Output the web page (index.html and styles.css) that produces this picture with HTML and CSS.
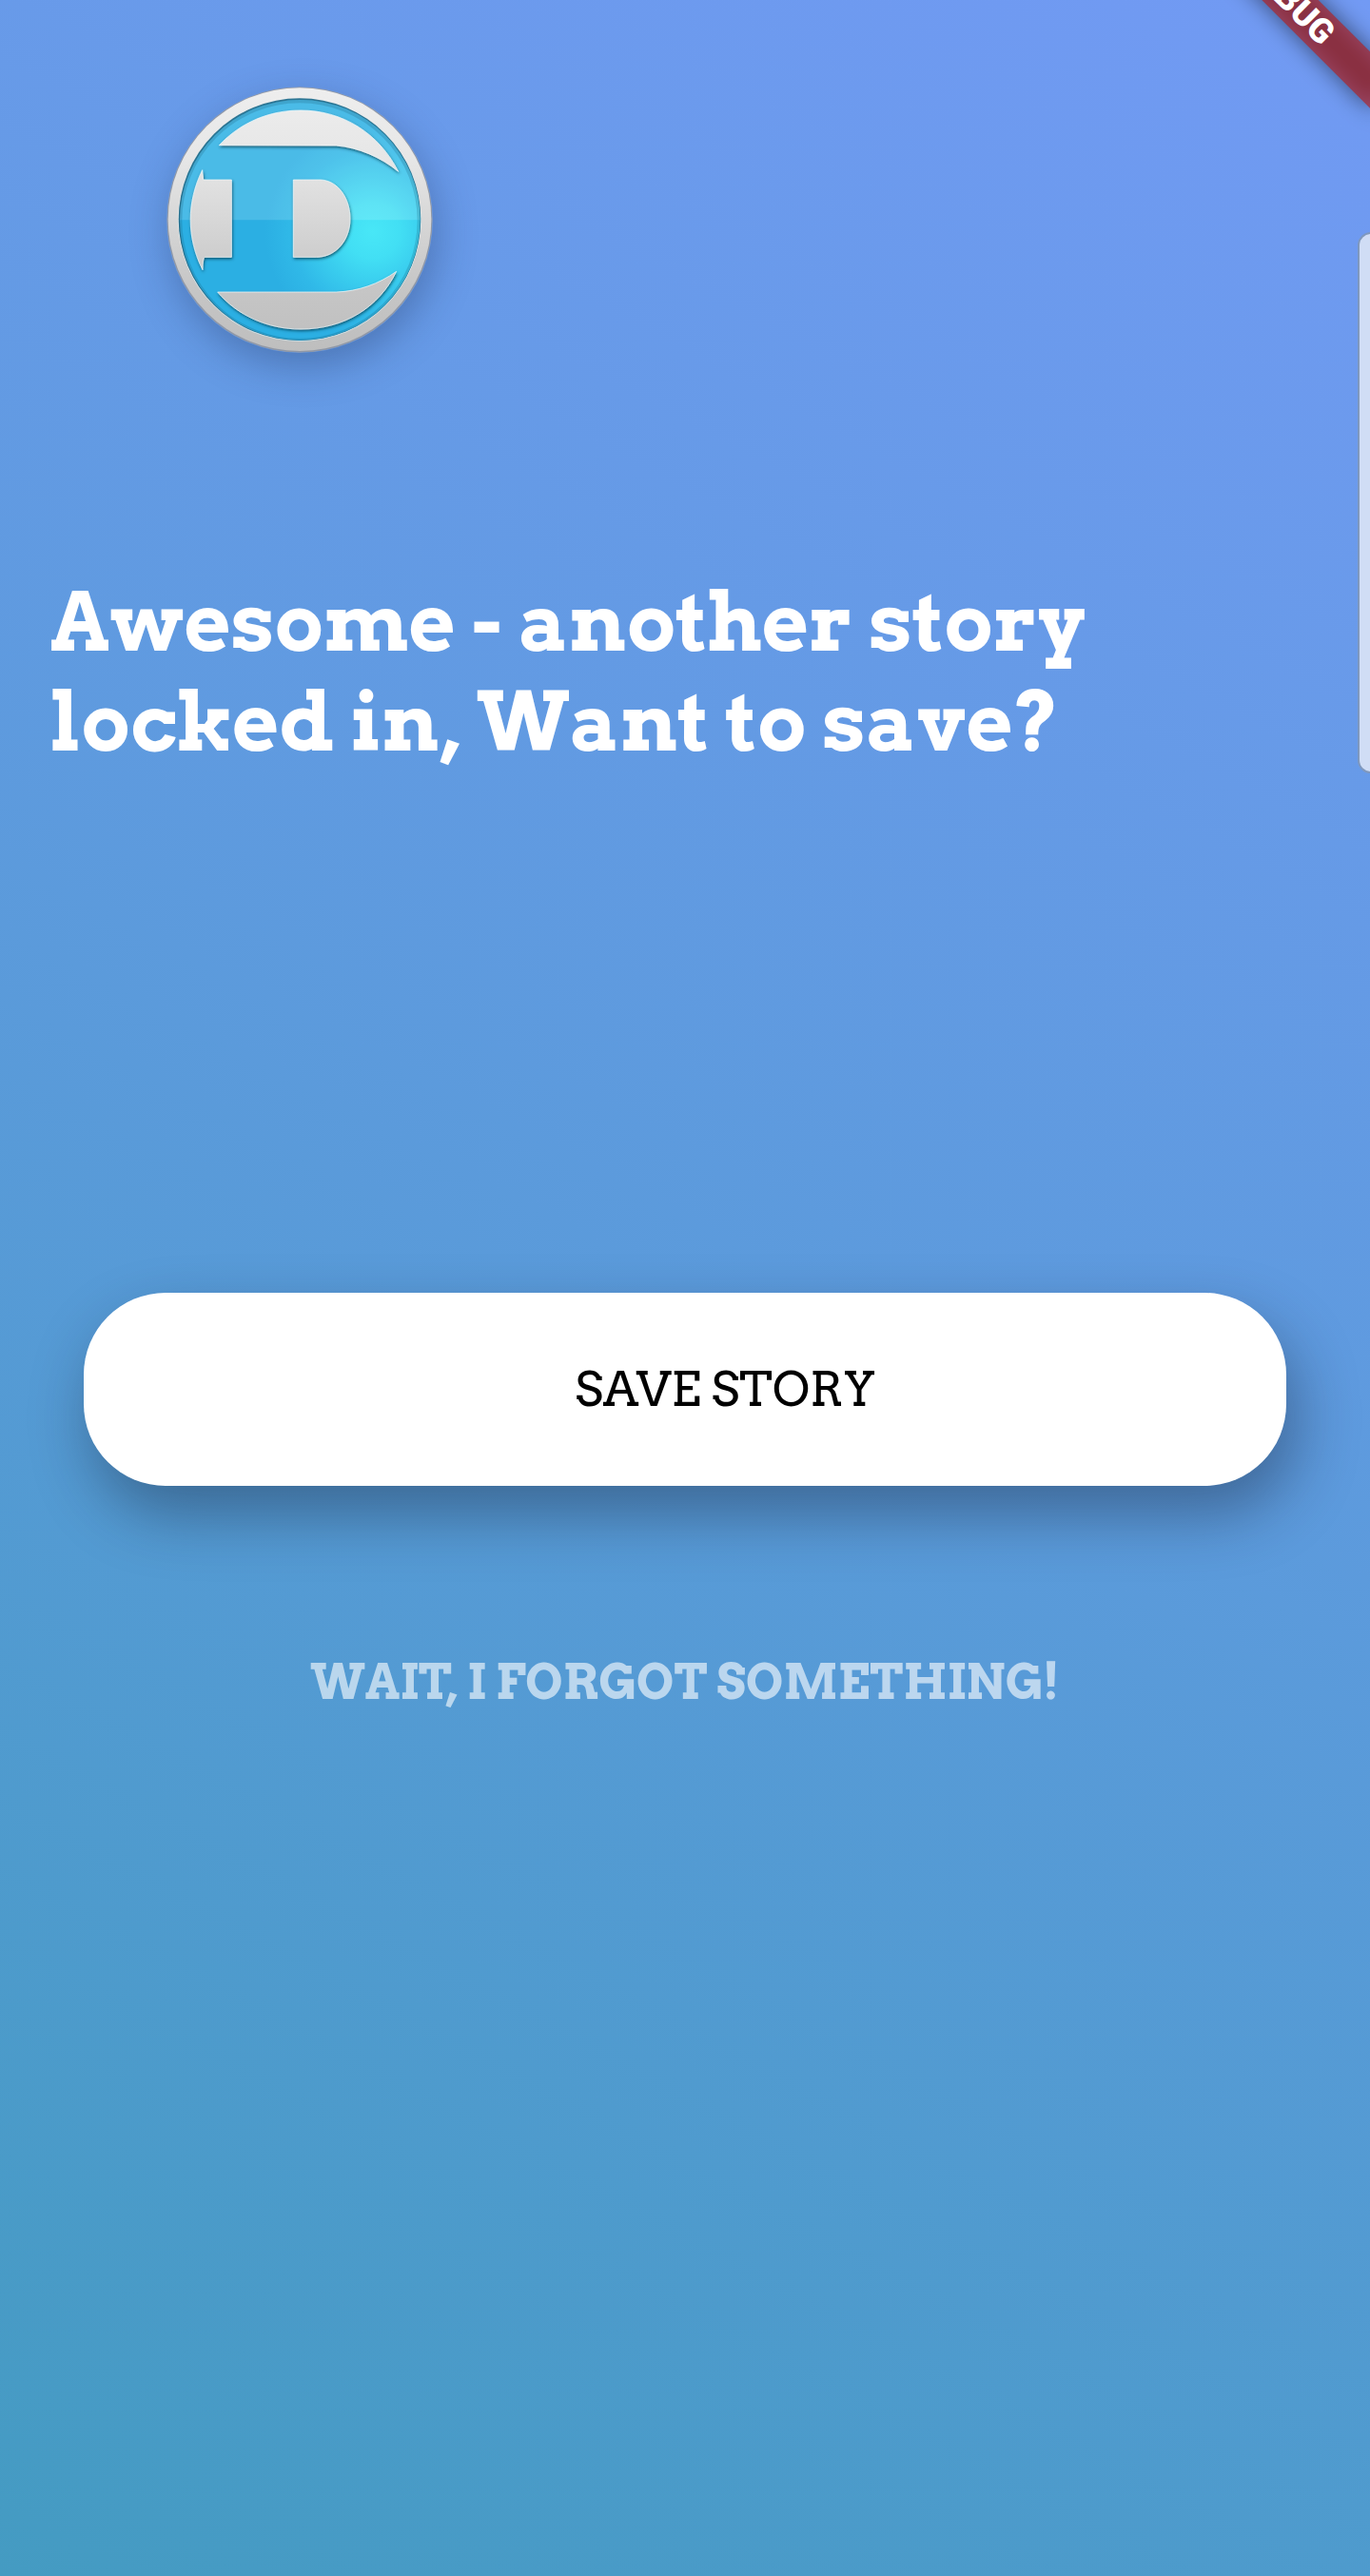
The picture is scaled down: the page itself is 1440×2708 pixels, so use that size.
FILE: index.html
```html
<!DOCTYPE html>
<html lang="en">
<head>
<meta charset="utf-8">
<meta name="viewport" content="width=device-width, initial-scale=1">
<title>Save story</title>
<link rel="stylesheet" href="styles.css">
</head>
<body>
<main class="screen">
  <div class="ribbon"><span class="ribbon-text">DEBUG</span></div>
  <div class="edge-handle"></div>
  <header class="brand">
    <svg class="logo" viewBox="75 63 840 840" role="img" aria-label="D logo">
      <defs>
        <linearGradient id="silver" gradientUnits="userSpaceOnUse" x1="0" y1="65" x2="0" y2="900">
          <stop offset="0" stop-color="#eeeeee"/>
          <stop offset=".28" stop-color="#e6e6e6"/>
          <stop offset=".75" stop-color="#c6c6c6"/>
          <stop offset="1" stop-color="#bebebe"/>
        </linearGradient>
        <radialGradient id="aqua" gradientUnits="userSpaceOnUse" cx="725" cy="520" r="340">
          <stop offset="0" stop-color="#48e7f7"/>
          <stop offset=".25" stop-color="#42dff4"/>
          <stop offset=".75" stop-color="#30b9e8"/>
          <stop offset="1" stop-color="#2bafe3"/>
        </radialGradient>
        <filter id="relief" x="-10%" y="-10%" width="120%" height="120%">
          <feDropShadow dx="2" dy="5" stdDeviation="5" flood-color="#063a50" flood-opacity=".8"/>
        </filter>
      </defs>
      <circle cx="495" cy="483" r="419" fill="#8f98a8"/>
      <circle cx="495" cy="482" r="415" fill="url(#silver)"/>
      <circle cx="495" cy="484" r="383" fill="#f2fdff"/>
      <circle cx="495" cy="482" r="382" fill="#2c7593"/>
      <circle cx="496" cy="484" r="379" fill="url(#aqua)"/>
      <path d="M117 484a379 379 0 0 1 758 0z" fill="#fff" opacity=".15"/>
      <circle cx="495" cy="486" r="376" fill="none" stroke="#14506b" stroke-opacity=".2" stroke-width="10"/>
      <g fill="url(#silver)" stroke="#f4feff" stroke-width="2" filter="url(#relief)">
        <path d="M241 248C310 175 400 138 498 138C630 138 745 210 806 331C750 285 680 255 610 249Z"/>
        <path d="M236 711H610C680 709 745 685 800 646C745 760 635 828 498 828C395 828 298 785 236 711Z"/>
        <path d="M188 326L191 357H280V601H196Q189 603 189 641C138 540 138 428 188 326Z"/>
        <path d="M475 357H562C620 361 654 420 654 480C654 545 612 600 548 601H475Z"/>
      </g>
    </svg>
  </header>
  <h1 class="title">Awesome - another story locked in, Want to save?</h1>
  <div class="actions">
    <button class="save" type="button">SAVE STORY</button>
    <button class="back" type="button">WAIT, I FORGOT SOMETHING!</button>
  </div>
</main>
</body>
</html>
```
FILE: styles.css
```css
* {
  box-sizing: border-box;
}

body {
  margin: 0;
  font-family: Arvo, "DejaVu Serif Condensed", "DejaVu Serif", serif;
}

.screen {
  position: relative;
  min-height: 100vh;
  padding: 91px 0;
  overflow: hidden;
  background: linear-gradient(28deg, #449bc2, #729af4);
}

.brand {
  padding-left: 175px;
}

.logo {
  display: block;
  width: 280px;
  height: 280px;
  border-radius: 50%;
  box-shadow: 4px 14px 40px rgba(30, 50, 90, 0.34);
}

.title {
  max-width: 1240px;
  margin: 230px 0 0;
  padding-left: 53px;
  color: #fff;
  font-size: 85px;
  line-height: 105px;
  font-weight: 700;
}

.actions {
  display: flex;
  flex-direction: column;
  align-items: center;
  gap: 146px;
  margin-top: 548px;
  padding: 0 88px;
}

.save,
.back {
  border: 0;
  font-family: inherit;
  font-size: 50px;
  cursor: pointer;
}

.save {
  width: 100%;
  height: 203px;
  padding: 0 0 0 84px;
  border-radius: 86px;
  background: #fff;
  color: #000;
  box-shadow: 10px 30px 64px rgba(20, 30, 50, 0.4);
}

.back {
  padding: 0;
  background: none;
  color: rgba(255, 255, 255, 0.6);
  line-height: 120px;
  font-weight: 700;
  white-space: nowrap;
}

.ribbon {
  position: absolute;
  top: -21px;
  right: -56px;
  width: 280px;
  height: 42px;
  transform: rotate(45deg);
  color: #fff;
  font: 900 36px/42px Roboto, sans-serif;
  text-align: center;
}

.ribbon::before,
.ribbon::after {
  content: "";
  position: absolute;
  inset: 0;
}

.ribbon::before {
  background: rgba(0, 0, 0, 0.5);
  filter: blur(12px);
}

.ribbon::after {
  background: rgba(183, 28, 28, 0.63);
}

.ribbon-text {
  position: relative;
  z-index: 1;
}

.edge-handle {
  position: absolute;
  top: 244px;
  right: -16px;
  width: 29px;
  height: 569px;
  border: 2px solid #7f98be;
  border-radius: 14px;
  background: #d0ddf5;
}
```
